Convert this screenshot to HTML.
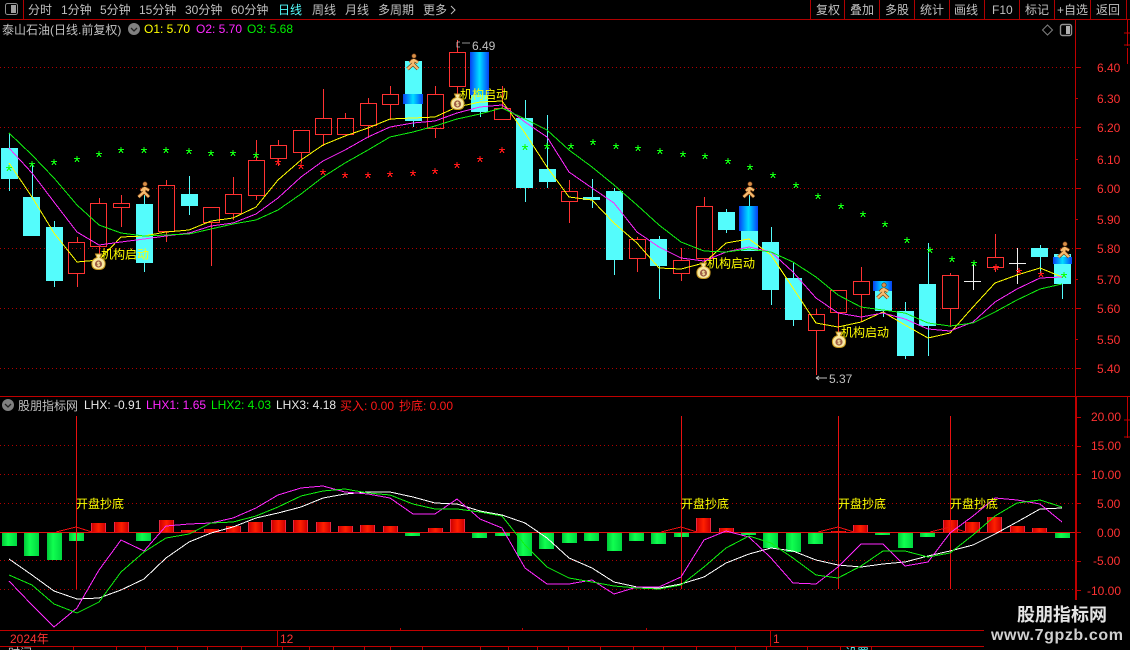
<!DOCTYPE html>
<html><head><meta charset="utf-8"><title>泰山石油</title>
<style>
html,body{margin:0;padding:0;background:#000;width:1130px;height:650px;overflow:hidden}
svg{display:block}
text{font-family:"Liberation Sans","WenQuanYi Zen Hei","Noto Sans CJK SC",sans-serif;font-size:12px}
.g{fill:#c0c0c0}.y{fill:#ffff00}.m{fill:#ff28ff}.n{fill:#00f000}.w{fill:#e8e8e8}.r{fill:#ff3232}.c{fill:#54fcfc}
.red{fill:#ff1818}
.d{stroke:#b00000;stroke-width:1;stroke-dasharray:1 3;fill:none}
.l{fill:none;stroke-width:1;shape-rendering:crispEdges}
</style></head><body>
<svg width="1130" height="650" viewBox="0 0 1130 650" xmlns="http://www.w3.org/2000/svg">
<defs>
<linearGradient id="b" x1="0" x2="1" y1="0" y2="0"><stop offset="0" stop-color="#0840f0"/><stop offset=".25" stop-color="#0090ff"/><stop offset=".5" stop-color="#00e0ff"/><stop offset=".75" stop-color="#0090ff"/><stop offset="1" stop-color="#0840f0"/></linearGradient>
<linearGradient id="rb" x1="0" x2="1" y1="0" y2="0"><stop offset="0" stop-color="#ff5080"/><stop offset=".07" stop-color="#d00000"/><stop offset=".5" stop-color="#ff2000"/><stop offset=".93" stop-color="#d00000"/><stop offset="1" stop-color="#ff5080"/></linearGradient>
<linearGradient id="gb" x1="0" x2="1" y1="0" y2="0"><stop offset="0" stop-color="#00c838"/><stop offset=".4" stop-color="#10ff50"/><stop offset="1" stop-color="#00d840"/></linearGradient>
<path id="g" d="M-3-.5h6M0-3v4M0 0l-2 3M0 0l2 3" stroke="#10ff10" fill="none" stroke-width="1" shape-rendering="crispEdges"/>
<path id="h" d="M-3-.5h6M0-3v4M0 0l-2 3M0 0l2 3" stroke="#ff1818" fill="none" stroke-width="1" shape-rendering="crispEdges"/>
<g id="run"><path d="M1-3L0 2M1-2L5 .5M0-2L-3 1M0 2L-5.500 7M0 2L5 7" stroke="#7a4010" stroke-width="3.600" fill="none"/><circle cx="1" cy="-6" r="2.200" fill="#d89048" stroke="#603010" stroke-width=".6"/><path d="M1-3L0 2M1-2L5 .5M0-2L-3 1M0 2L-5.500 7M0 2L5 7" stroke="#f8bc70" stroke-width="2.200" fill="none"/></g>
<g id="bag"><path d="M-3-8L3-8L1.500-4.500C6-3 7 0 6.500 3C6 6.500 3 7.500 0 7.500C-3 7.500-6 6.500-6.500 3C-7 0-6-3-1.500-4.500Z" fill="#f8e8a0" stroke="#c89820"/><circle cx="0" cy="2" r="3.600" fill="#a06048"/><path d="M1.500 .3H-1V2H1V3.700H-1.500M0-.5V4.500" stroke="#f8e8a0" fill="none" stroke-width=".7"/></g>
</defs>
<rect width="1130" height="650" fill="#000"/>

<!-- toolbar -->
<g shape-rendering="crispEdges" stroke="#b00000" fill="none">
<path d="M0 19.500H1130M23.500 0V19M810.500 0V19M844.500 0V19M879.500 0V19M914.500 0V19M949.500 0V19M984.500 0V19M1019.500 0V19M1054.500 0V19M1090.500 0V19M1126.500 0V19"/>
<path d="M1075.500 20V396M1075.500 396V600" stroke="#c00000"/>
<path d="M0 396.500H1075M1075 396.500H1130M0 630.500H984M0 646.500H984" stroke="#c00000"/>
<path d="M1076.500 397V600" stroke="#c00000"/>
<path d="M1127.500 20V46M1127.500 48V64M1124 33h6M1124 45h6M1127.500 397V438M1124 420h6M1124 437h6" stroke="#c00000"/>
<path d="M1075 67.500h6M1075 127.500h6M1075 188.500h6M1075 248.500h6M1075 308.500h6M1075 368.500h6M1075 98.500h3M1075 159.500h3M1075 219.500h3M1075 279.500h3M1075 339.500h3" stroke="#c00000"/>
<path d="M1075 417.500h6M1075 446.500h6M1075 474.500h6M1075 503.500h6M1075 532.500h6M1075 561.500h6M1075 590.500h6" stroke="#c00000"/>
<path d="M277.500 630V646M770.500 630V646M400.500 628v3M522.500 628v3M646.500 628v3" stroke="#c00000"/>
<path d="M73.500 646v4M116.500 646v4M145.500 646v4M177.500 646v4M207.500 646v4M241.500 646v4M282.500 646v4M309.500 646v4M333.500 646v4M364.500 646v4M390.500 646v4M422.500 646v4M480.500 646v4M508.500 646v4M537.500 646v4M568.500 646v4M600.500 646v4M633.500 646v4M663.500 646v4M696.500 646v4M735.500 646v4M766.500 646v4M807.500 646v4M840.500 646v4M871.500 646v4" stroke="#c00000"/>
</g>
<rect x="5.500" y="3.500" width="12" height="11" rx="2" fill="none" stroke="#909090"/><rect x="11" y="5" width="5" height="8" fill="#a0a0a0"/>
<text x="28" y="14" class="g">分时</text><text x="61" y="14" class="g">1分钟</text><text x="100" y="14" class="g">5分钟</text><text x="139" y="14" class="g">15分钟</text><text x="185" y="14" class="g">30分钟</text><text x="231" y="14" class="g">60分钟</text><text x="278" y="14" class="c">日线</text><text x="312" y="14" class="g">周线</text><text x="345" y="14" class="g">月线</text><text x="378" y="14" class="g">多周期</text><text x="423" y="14" class="g">更多</text>
<path d="M451 6l4 4l-4 4" stroke="#c0c0c0" fill="none"/>
<text x="816" y="14" class="g">复权</text><text x="850" y="14" class="g">叠加</text><text x="885" y="14" class="g">多股</text><text x="920" y="14" class="g">统计</text><text x="954" y="14" class="g">画线</text><text x="992" y="14" class="g">F10</text><text x="1025" y="14" class="g">标记</text><text x="1057" y="14" class="g">+自选</text><text x="1096" y="14" class="g">返回</text>

<!-- title row -->
<text x="2" y="34" class="g">泰山石油(日线.前复权)</text>
<circle cx="134" cy="29" r="6" fill="#808080"/><path d="M131 28l3 3l3-3" stroke="#222" fill="none" stroke-width="1.300"/>
<text x="144" y="33" class="y">O1: 5.70</text><text x="196" y="33" class="m">O2: 5.70</text><text x="247" y="33" class="n">O3: 5.68</text>
<path d="M1047.500 25l5 5l-5 5l-5-5z" fill="none" stroke="#808080"/>
<rect x="1060.500" y="24.500" width="11" height="11" rx="2" fill="none" stroke="#909090" stroke-width="1.400"/><rect x="1066" y="26" width="4" height="8" fill="#b0b0b0"/>

<!-- grid -->
<path class="d" d="M0 67.500H1075M0 127.500H1075M0 188.500H1075M0 248.500H1075M0 308.500H1075M0 368.500H1075M0 445.500H1075M0 474.500H1075M0 503.500H1075M0 560.500H1075M0 589.500H1075"/>

<!-- axis labels -->
<g class="r"><text x="1097" y="72" class="r">6.40</text><text x="1097" y="103" class="r">6.30</text><text x="1097" y="132" class="r">6.20</text><text x="1097" y="164" class="r">6.10</text><text x="1097" y="193" class="r">6.00</text><text x="1097" y="224" class="r">5.90</text><text x="1097" y="253" class="r">5.80</text><text x="1097" y="284" class="r">5.70</text><text x="1097" y="313" class="r">5.60</text><text x="1097" y="344" class="r">5.50</text><text x="1097" y="373" class="r">5.40</text>
<text x="1091" y="421" class="r">20.00</text><text x="1091" y="450" class="r">15.00</text><text x="1091" y="479" class="r">10.00</text><text x="1097" y="508" class="r">5.00</text><text x="1097" y="537" class="r">0.00</text><text x="1093" y="565" class="r">-5.00</text><text x="1087" y="595" class="r">-10.00</text></g>

<!-- candles -->
<g shape-rendering="crispEdges">
<path stroke="#54fcfc" fill="none" d="M9.500 133V191M32.500 163V197M54.500 221V287M144.500 195V272M189.500 176V215M413.500 121V127M480.500 112V117M525.500 100V202M547.500 115V188M592.500 179V208M614.500 188V275M659.500 236V299M726.500 209V233M749.500 195V206M771.500 227V305M793.500 263V326M883.500 311V317M905.500 302V359M928.500 243V356M1040.500 245V273M1062.500 284V299"/>
<path fill="#54fcfc" d="M1 148h17v31H1zM23 197h17v39H23zM46 227h17v54H46zM136 204h17v59h-17zM181 194h17v12h-17zM405 61h17v60h-17zM471 95h17v17h-17zM516 118h17v70h-17zM539 169h17v13h-17zM583 197h17v3h-17zM606 191h17v69h-17zM650 239h17v27h-17zM718 212h17v18h-17zM741 231h17v20h-17zM762 242h17v48h-17zM785 278h17v42h-17zM875 291h17v20h-17zM897 311h17v45h-17zM919 284h17v42h-17zM1031 248h17v9h-17zM1054 254h17v30h-17z"/>
<rect x="403" y="94" width="20" height="10" fill="url(#b)"/>
<rect x="470" y="52" width="19" height="43" fill="url(#b)"/>
<rect x="739" y="206" width="19" height="25" fill="url(#b)"/>
<rect x="873" y="281" width="19" height="10" fill="url(#b)"/>
<rect x="1053" y="257" width="19" height="7" fill="url(#b)"/>
<path stroke="#ff3232" fill="none" d="M77.500 237V242M77.500 273V287M99.500 198V203M99.500 246V257M121.500 195V203M121.500 207V227M166.500 180V185M166.500 231V242M211.500 222V266M233.500 177V194M233.500 213V220M256.500 140V160M256.500 195V200M278.500 140V145M278.500 158V166M301.500 152V163M323.500 89V118M323.500 134V146M345.500 113V118M345.500 134V135M368.500 98V103M368.500 125V138M390.500 86V94M390.500 104V120M435.500 86V94M435.500 128V138M457.500 40V52M457.500 86V100M502.500 86V108M569.500 180V191M569.500 201V223M637.500 237V239M637.500 258V272M681.500 248V260M681.500 273V281M704.500 197V206M704.500 258V265M816.500 309V314M816.500 330V375M838.500 312V332M861.500 267V281M861.500 294V322M950.500 273V275M950.500 308V327M995.500 234V257M995.500 267V272"/>
<path stroke="#ff3232" fill="none" d="M68.500 242.500h16v31h-16zM90.500 203.500h16v43h-16zM113.500 203.500h16v4h-16zM158.500 185.500h16v46h-16zM203.500 207.500h16v15h-16zM225.500 194.500h16v19h-16zM248.500 160.500h16v35h-16zM270.500 145.500h16v13h-16zM293.500 130.500h16v22h-16zM315.500 118.500h16v16h-16zM337.500 118.500h16v16h-16zM360.500 103.500h16v22h-16zM382.500 94.500h16v10h-16zM427.500 94.500h16v34h-16zM449.500 52.500h16v34h-16zM494.500 108.500h16v11h-16zM561.500 191.500h16v10h-16zM629.500 239.500h16v19h-16zM673.500 260.500h16v13h-16zM696.500 206.500h16v52h-16zM808.500 314.500h16v16h-16zM830.500 290.500h16v22h-16zM853.500 281.500h16v13h-16zM942.500 275.500h16v33h-16zM987.500 257.500h16v10h-16z"/>
<path stroke="#f0f0f0" fill="none" d="M964 281.500h17M973.500 263V290M1009 263.500h17M1017.500 248V284"/>
</g>

<!-- MA lines -->
<polyline class="l" stroke="#ffff00" points="9,163 32,197 54,233 77,262 99,260 121,237 144,236 166,232 189,230 211,221 233,218 256,207 278,180 301,160 323,145 345,136 368,128 390,119 413,118 435,117 457,107 480,102 502,101 525,133 547,167 569,197 592,200 614,223 637,243 659,268 681,269 704,263 726,243 749,239 771,255 793,288 816,323 838,327 861,322 883,312 905,325 928,338 950,333 973,307 995,283 1017,275 1040,268 1062,277"/>
<polyline class="l" stroke="#ff28ff" points="9,148 32,173 54,202 77,232 99,245 121,242 144,239 166,236 189,233 211,226 233,223 256,214 278,198 301,177 323,161 345,150 368,137 390,127 413,123 435,121 457,113 480,107 502,105 525,122 547,137 569,172 592,188 614,203 637,232 659,247 681,258 704,261 726,252 749,247 771,252 793,272 816,298 838,313 861,317 883,313 905,319 928,329 950,331 973,322 995,302 1017,289 1040,278 1062,277"/>
<polyline class="l" stroke="#10f010" points="9,133 32,155 54,178 77,205 99,225 121,233 144,236 166,235 189,234 211,229 233,224 256,220 278,210 301,194 323,177 345,163 368,150 390,137 413,132 435,126 457,119 480,114 502,108 525,119 547,130 569,150 592,167 614,185 637,205 659,225 681,242 704,251 726,252 749,249 771,252 793,262 816,277 838,295 861,307 883,310 905,313 928,323 950,326 973,323 995,312 1017,300 1040,289 1062,284"/>

<!-- stars -->
<use href="#g" x="9" y="168"/><use href="#g" x="32" y="164"/><use href="#g" x="54" y="162"/><use href="#g" x="77" y="159"/><use href="#g" x="99" y="154"/><use href="#g" x="121" y="150"/><use href="#g" x="144" y="150"/><use href="#g" x="166" y="150"/><use href="#g" x="189" y="151"/><use href="#g" x="211" y="153"/><use href="#g" x="233" y="153"/><use href="#g" x="256" y="155"/>
<use href="#h" x="278" y="162"/><use href="#h" x="301" y="166"/><use href="#h" x="323" y="172"/><use href="#h" x="345" y="175"/><use href="#h" x="368" y="175"/><use href="#h" x="390" y="174"/><use href="#h" x="413" y="173"/><use href="#h" x="435" y="171"/><use href="#h" x="457" y="165"/><use href="#h" x="480" y="159"/><use href="#h" x="502" y="150"/>
<use href="#g" x="525" y="147"/><use href="#g" x="547" y="146"/><use href="#g" x="571" y="146"/><use href="#g" x="593" y="142"/><use href="#g" x="616" y="146"/><use href="#g" x="638" y="148"/><use href="#g" x="660" y="151"/><use href="#g" x="683" y="154"/><use href="#g" x="705" y="156"/><use href="#g" x="728" y="161"/><use href="#g" x="750" y="167"/><use href="#g" x="773" y="175"/><use href="#g" x="796" y="185"/><use href="#g" x="818" y="196"/><use href="#g" x="841" y="206"/><use href="#g" x="863" y="214"/><use href="#g" x="885" y="224"/><use href="#g" x="907" y="240"/><use href="#g" x="930" y="250"/><use href="#g" x="952" y="259"/><use href="#g" x="974" y="263"/>
<use href="#h" x="996" y="267"/><use href="#h" x="1019" y="271"/><use href="#h" x="1041" y="274"/><use href="#g" x="1064" y="275"/>

<!-- icons -->
<use href="#run" x="144" y="190"/><use href="#run" x="413" y="62"/><use href="#run" x="749" y="190"/><use href="#run" x="883" y="291"/><use href="#run" x="1064" y="250"/>
<use href="#bag" x="98.500" y="262"/><use href="#bag" x="457.500" y="102"/><use href="#bag" x="703.500" y="271"/><use href="#bag" x="839" y="340"/>

<text x="101" y="258.500" class="y">机构启动</text><text x="460" y="98.500" class="y">机构启动</text><text x="707" y="267.500" class="y">机构启动</text><text x="841" y="336.500" class="y">机构启动</text>
<text x="472" y="50" class="g">6.49</text><path d="M457 42h3M457 42v5h3M462 43h8" stroke="#c0c0c0" fill="none" stroke-width=".8"/>
<text x="829" y="383" class="g">5.37</text><path d="M816 378h11M816 378l3-2M816 378l3 2" stroke="#c0c0c0" fill="none"/>

<!-- indicator header -->
<circle cx="8" cy="405" r="6" fill="#808080"/><path d="M5 404l3 3l3-3" stroke="#222" fill="none" stroke-width="1.300"/>
<text x="18" y="410" class="g">股朋指标网</text><text x="84" y="409" class="w">LHX: -0.91</text><text x="146" y="409" class="m">LHX1: 1.65</text><text x="211" y="409" class="n">LHX2: 4.03</text><text x="276" y="409" class="w">LHX3: 4.18</text><text x="340" y="410" class="red">买入: 0.00</text><text x="399" y="410" class="red">抄底: 0.00</text>

<!-- histogram -->
<g shape-rendering="crispEdges">
<g fill="url(#gb)"><rect x="2" y="532" width="15" height="14"/><rect x="24" y="532" width="15" height="24"/><rect x="47" y="532" width="15" height="28"/><rect x="69" y="532" width="15" height="9"/><rect x="136" y="532" width="15" height="9"/><rect x="405" y="532" width="15" height="4"/><rect x="472" y="532" width="15" height="6"/><rect x="495" y="532" width="15" height="4"/><rect x="517" y="532" width="15" height="24"/><rect x="539" y="532" width="15" height="17"/><rect x="562" y="532" width="15" height="11"/><rect x="584" y="532" width="15" height="9"/><rect x="607" y="532" width="15" height="19"/><rect x="629" y="532" width="15" height="9"/><rect x="651" y="532" width="15" height="12"/><rect x="674" y="532" width="15" height="5"/><rect x="741" y="532" width="15" height="3"/><rect x="763" y="532" width="15" height="16"/><rect x="786" y="532" width="15" height="20"/><rect x="808" y="532" width="15" height="12"/><rect x="875" y="532" width="15" height="3"/><rect x="898" y="532" width="15" height="16"/><rect x="920" y="532" width="15" height="5"/><rect x="1055" y="532" width="15" height="6"/></g>
<g fill="url(#rb)"><rect x="91" y="523" width="15" height="9"/><rect x="114" y="522" width="15" height="10"/><rect x="159" y="520" width="15" height="12"/><rect x="181" y="530" width="15" height="2"/><rect x="204" y="529" width="15" height="3"/><rect x="226" y="526" width="15" height="6"/><rect x="248" y="522" width="15" height="10"/><rect x="271" y="520" width="15" height="12"/><rect x="293" y="520" width="15" height="12"/><rect x="316" y="522" width="15" height="10"/><rect x="338" y="526" width="15" height="6"/><rect x="360" y="525" width="15" height="7"/><rect x="383" y="526" width="15" height="6"/><rect x="428" y="528" width="15" height="4"/><rect x="450" y="519" width="15" height="13"/><rect x="696" y="518" width="15" height="14"/><rect x="719" y="528" width="15" height="4"/><rect x="831" y="531" width="15" height="1"/><rect x="853" y="525" width="15" height="7"/><rect x="943" y="520" width="15" height="12"/><rect x="965" y="522" width="15" height="10"/><rect x="987" y="517" width="15" height="15"/><rect x="1010" y="526" width="15" height="6"/><rect x="1032" y="528" width="15" height="4"/></g>
<path d="M0 532.500H1075" stroke="#e01010" fill="none"/>
<path d="M76.500 416V589M681.500 416V589M838.500 416V589M950.500 416V589" stroke="#e81010" fill="none"/>
</g>
<polyline class="l" stroke="#f01010" points="56,532 76,527 92,532"/><polyline class="l" stroke="#f01010" points="661,532 681,527 697,532"/><polyline class="l" stroke="#f01010" points="818,532 838,527 854,532"/><polyline class="l" stroke="#f01010" points="930,532 950,527 966,532"/>

<polyline class="l" stroke="#ffffff" points="9,559 32,575 54,591 77,599 99,598 121,590 144,579 166,558 189,542 211,533 233,527 256,518 278,513 301,507 323,498 345,494 368,492 390,492 413,497 435,503 457,504 480,511 502,515 525,523 547,538 569,558 592,568 614,582 637,587 659,588 681,584 704,577 726,563 749,554 771,548 793,551 816,560 838,565 861,567 883,564 905,562 928,556 950,551 973,545 995,534 1017,522 1040,509 1062,508"/>
<polyline class="l" stroke="#ff28ff" points="9,581 32,605 54,627 77,608 99,570 121,540 144,551 166,526 189,524 211,523 233,518 256,508 278,495 301,488 323,486 345,492 368,494 390,498 413,514 435,514 457,499 480,519 502,528 525,568 547,584 569,584 592,580 614,594 637,587 659,587 681,577 704,540 726,531 749,537 771,558 793,583 816,584 838,567 861,544 883,544 905,566 928,562 950,533 973,516 995,498 1017,500 1040,504 1062,522"/>
<polyline class="l" stroke="#10f010" points="9,575 32,585 54,604 77,613 99,602 121,572 144,552 166,538 189,534 211,523 233,522 256,516 278,507 301,496 323,491 345,489 368,493 390,495 413,504 435,509 457,509 480,512 502,516 525,545 547,567 569,578 592,582 614,586 637,588 659,589 681,585 704,567 726,548 749,536 771,543 793,558 816,575 838,578 861,566 883,551 905,551 928,557 950,553 973,535 995,516 1017,503 1040,500 1062,507"/>

<text x="76" y="508" class="y">开盘抄底</text><text x="681" y="508" class="y">开盘抄底</text><text x="838" y="508" class="y">开盘抄底</text><text x="950" y="508" class="y">开盘抄底</text>

<!-- date axis -->
<text x="10" y="643" class="r">2024年</text><text x="280" y="643" class="r">12</text><text x="773" y="643" class="r">1</text>
<text x="8" y="657" class="g">时间</text><text x="845" y="657" class="c">设置</text>

<!-- watermark -->
<rect x="984" y="600" width="146" height="50" fill="#000"/>
<text x="1017" y="621" style="font-size:18px;font-weight:bold;fill:#e4e4e4">股朋指标网</text>
<text x="991" y="640" style="font-size:16px;font-weight:bold;fill:#d0d0d0;letter-spacing:.6px">www.7gpzb.com</text>
</svg>
</body></html>
